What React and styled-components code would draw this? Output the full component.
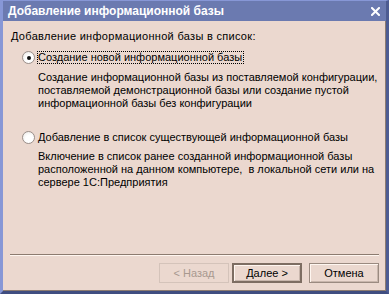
import React from "react";
import styled, { createGlobalStyle } from "styled-components";

const Global = createGlobalStyle`
  html, body { margin: 0; padding: 0; background: #6b7ab0; }
  body { width: 389px; height: 294px; overflow: hidden; }
`;

const Frame = styled.div`
  width: 389px;
  height: 294px;
  box-sizing: border-box;
  background: #6b7ab0;
  border-left: 3px solid #8797d6;
  border-right: 3px solid #4d5c92;
  border-bottom: 3px solid #3f4d80;
  border-top: 1px solid #8797d6;
  display: flex;
  flex-direction: column;
`;

const TitleBar = styled.div`
  height: 20px;
  flex: none;
  display: flex;
  align-items: center;
  justify-content: space-between;
  padding: 0 6px 0 5px;
  color: #fff;
  font-family: "Liberation Sans", Arial, sans-serif;
  font-weight: bold;
  font-size: 12px;
`;

const Close = styled.svg`
  width: 9px;
  height: 9px;
  margin-top: 1px;
`;

const Body = styled.div`
  flex: 1;
  background: #ebd8cf;
  border-right: 1px solid #8c7b70;
  border-bottom: 1px solid #8c7b70;
  padding: 9px 6px 0 8px;
  display: flex;
  flex-direction: column;
  font-family: "Liberation Sans", Arial, sans-serif;
  font-size: 11px;
  color: #000;
  white-space: nowrap;
`;

const Heading = styled.div`
  line-height: 13px;
  letter-spacing: 0.3px;
`;

const Option = styled.div`
  display: flex;
  align-items: center;
  margin-top: ${(p) => p.$mt}px;
  padding-left: 11px;
  height: 13px;
`;

const Radio = styled.span`
  width: 11px;
  height: 11px;
  border-radius: 50%;
  border: 1px solid #9a8f8a;
  background: radial-gradient(circle at 60% 65%, #ffffff 40%, #e8e4e0 100%);
  display: flex;
  align-items: center;
  justify-content: center;
  flex: none;
  margin-right: 2px;
  &::after {
    content: "";
    width: 4px;
    height: 4px;
    border-radius: 50%;
    background: ${(p) => (p.$checked ? "#111" : "transparent")};
  }
`;

const Label = styled.span`
  line-height: 11px;
  padding: 0 1px 0 0;
  border: 1px dotted ${(p) => (p.$focus ? "#000" : "transparent")};
`;

const Desc = styled.div`
  margin: ${(p) => p.$mt}px 0 0 27px;
  line-height: 13px;
`;

const Spacer = styled.div`
  flex: 1;
`;

const Separator = styled.div`
  height: 0;
  border-top: 1px solid #8c7b70;
  border-bottom: 1px solid #fff6f0;
  margin-left: -1px;
`;

const Buttons = styled.div`
  display: flex;
  justify-content: flex-end;
  gap: 3px;
  padding: 7px 0 7px 0;
`;

const Button = styled.button`
  width: 70px;
  height: 20px;
  box-sizing: border-box;
  margin-left: ${(p) => p.$ml || 0}px;
  font-family: "Liberation Sans", Arial, sans-serif;
  font-size: 11px;
  background: #ebd8cf;
  padding: 0;
  color: ${(p) => (p.disabled ? "#a8998f" : "#000")};
  border: ${(p) =>
    p.$default
      ? "2px solid #7d6d62"
      : p.disabled
      ? "1px solid #d4c3ba"
      : "1px solid #9a8a80"};
  box-shadow: ${(p) =>
    p.disabled ? "none" : "inset 1px 1px 0 #fff6f0, inset -1px -1px 0 #c8b6ac"};
`;

export default function App() {
  return (
    <>
      <Global />
      <Frame>
        <TitleBar>
          <span>Добавление информационной базы</span>
          <Close viewBox="0 0 9 9">
            <path d="M1 1 L8 8 M8 1 L1 8" stroke="#fff" strokeWidth="2" strokeLinecap="square" />
          </Close>
        </TitleBar>
        <Body>
          <Heading>Добавление информационной базы в список:</Heading>
          <Option $mt={8}>
            <Radio $checked />
            <Label $focus>Создание новой информационной базы</Label>
          </Option>
          <Desc $mt={7}>
            Создание информационной базы из поставляемой конфигурации,
            <br />
            поставляемой демонстрационной базы или создание пустой
            <br />
            информационной базы без конфигурации
          </Desc>
          <Option $mt={21}>
            <Radio />
            <Label>Добавление в список существующей информационной базы</Label>
          </Option>
          <Desc $mt={6}>
            Включение в список ранее созданной информационной базы
            <br />
            расположенной на данном компьютере,&nbsp; в локальной сети или на
            <br />
            сервере 1С:Предприятия
          </Desc>
          <Spacer />
          <Separator />
          <Buttons>
            <Button disabled>&lt; Назад</Button>
            <Button $default>Далее &gt;</Button>
            <Button $ml={4}>Отмена</Button>
          </Buttons>
        </Body>
      </Frame>
    </>
  );
}
